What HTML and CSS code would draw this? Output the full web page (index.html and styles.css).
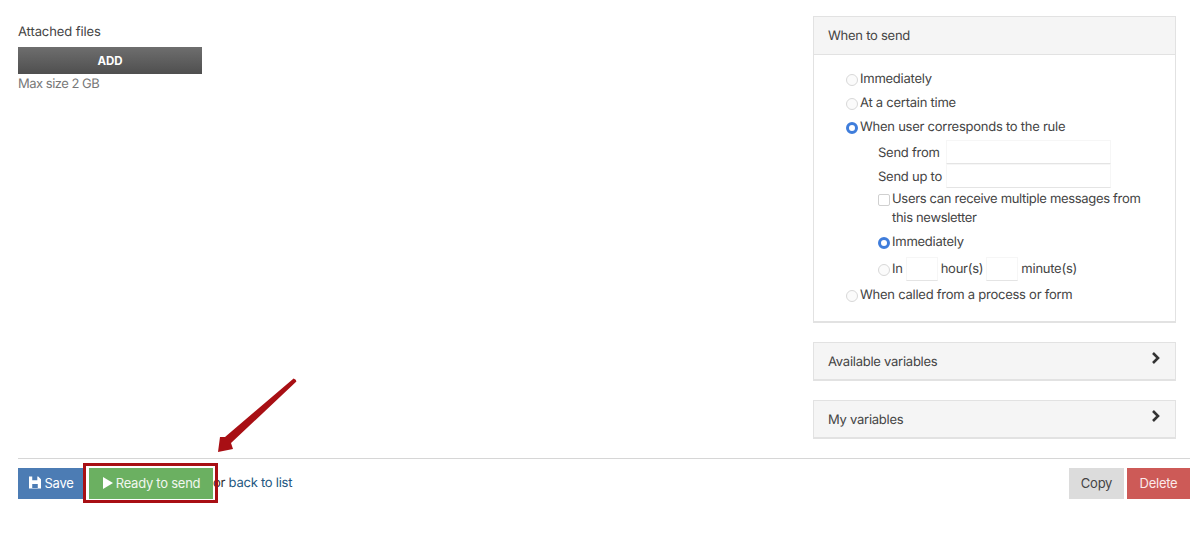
FILE: index.html
```html
<!DOCTYPE html>
<html lang="en">
<head>
<meta charset="utf-8">
<title>Newsletter</title>
<link rel="stylesheet" href="styles.css">
</head>
<body>
<div class="page">
  <div class="columns">
    <section class="files">
      <div class="files-label">Attached files</div>
      <button class="add-btn">ADD</button>
      <div class="files-hint">Max size 2 GB</div>
    </section>
    <aside class="side">
      <div class="panel">
        <div class="panel-head">When to send</div>
        <div class="panel-body">
          <label class="opt"><span class="radio"></span>Immediately</label>
          <label class="opt"><span class="radio"></span>At a certain time</label>
          <label class="opt"><span class="radio on"></span>When user corresponds to the rule</label>
          <div class="sub">
            <div class="field first"><span class="field-label">Send from</span><span class="input wide"></span></div>
            <div class="field"><span class="field-label">Send up to</span><span class="input wide"></span></div>
            <label class="check-row"><span class="check"></span><span>Users can receive multiple messages from this newsletter</span></label>
            <label class="opt sub-opt"><span class="radio on"></span>Immediately</label>
            <div class="in-row"><span class="radio"></span>In<span class="input small"></span>hour(s)<span class="input small"></span>minute(s)</div>
          </div>
          <label class="opt last-opt"><span class="radio"></span>When called from a process or form</label>
        </div>
      </div>
      <div class="panel closed">
        <div class="panel-head">Available variables
          <svg class="chev" viewBox="0 0 10 14" width="10" height="14"><path d="M2 2l5 5-5 5" fill="none" stroke="#333" stroke-width="2.6"/></svg>
        </div>
      </div>
      <div class="panel closed">
        <div class="panel-head">My variables
          <svg class="chev" viewBox="0 0 10 14" width="10" height="14"><path d="M2 2l5 5-5 5" fill="none" stroke="#333" stroke-width="2.6"/></svg>
        </div>
      </div>
    </aside>
  </div>
  <footer class="actions">
    <div class="actions-left">
      <button class="btn save">
        <svg viewBox="0 0 13 13" width="12" height="13"><path fill="#fff" fill-rule="evenodd" d="M0 0h10l3 3v10H0zM3.500 0v4h5.500V0zM3.500 8v4.500h6V8z"/></svg>
        Save</button>
      <button class="btn ready">
        <svg viewBox="0 0 10 12" width="10" height="12"><path fill="#fff" d="M0 0l10 6-10 6z"/></svg>
        Ready to send</button>
      <span class="or">or <a class="back" href="#">back to list</a></span>
    </div>
    <div class="actions-right">
      <button class="btn copy">Copy</button>
      <button class="btn delete">Delete</button>
    </div>
  </footer>
  <div class="highlight"></div>
  <svg class="arrow" viewBox="0 0 90 90" width="90" height="90"><path fill="#a80f14" d="M78.600 3.600Q81.500 4.500 81.400 6.600L16 68L18 74L3 77L5 62L10 62Z"/></svg>
</div>
</body>
</html>
```
FILE: styles.css
```css
* { box-sizing: border-box; }
html, body { margin: 0; height: 100%; overflow: hidden; background: #fff; }
body { font-family: Inter, "Liberation Sans", sans-serif; font-size: 13px; letter-spacing: -0.25px; color: #444; text-rendering: geometricPrecision; }
.page { position: relative; padding: 16px 10px 0 18px; height: 552px; }
.columns { display: flex; justify-content: space-between; padding-right: 14px; height: 432px; }
.files { width: 184px; padding-top: 8px; }
.files-label { line-height: 16px; color: #444; letter-spacing: -0.1px; }
.add-btn { display: block; width: 184px; height: 27px; margin-top: 7px; border: 0; color: #fff; font: 700 11.500px Inter, "Liberation Sans", sans-serif; background: linear-gradient(#6e6e6e, #4f4f4f); }
.files-hint { color: #777; line-height: 18px; padding-top: 1px; letter-spacing: -0.5px; }
.side { width: 363px; display: flex; flex-direction: column; gap: 19px; }
.panel { border: 1px solid #e2e2e2; border-bottom-width: 2px; }
.panel-head { display: flex; justify-content: space-between; align-items: center; height: 38px; padding: 0 14px; background: #f5f5f5; border-bottom: 1px solid #e2e2e2; color: #444; }
.closed .panel-head { border-bottom: 0; height: 36px; padding-top: 1px; }
.chev { margin-top: -7px; }
.panel-body { padding: 12px 0 0 32px; height: 266px; }
.opt { display: flex; align-items: center; height: 24px; gap: 2px; }
.radio { width: 12px; height: 12px; border-radius: 50%; border: 1px solid #d8d8d8; background: #fbfbfb; flex: none; margin-top: 2px; }
.radio.on { border: 3.500px solid #3f7ddb; background: #fff; }
.sub { padding-left: 32px; }
.field { display: flex; align-items: center; height: 24px; }
.field.first { margin-top: 1px; }
.field-label { width: 68px; flex: none; white-space: nowrap; padding-top: 2px; }
.input { display: inline-block; background: #fff; border: 1px solid #f6f6f6; border-bottom: 1px solid #e4e4e4; }
.input.wide { width: 165px; height: 24px; }
.input.small { width: 32px; height: 24px; margin: 0 3px; }
.check-row { display: flex; gap: 2px; line-height: 19px; margin-top: 2px; width: 270px; letter-spacing: -0.32px; }
.check { width: 12px; height: 12px; border: 1px solid #d0d0d0; border-radius: 2px; flex: none; margin-top: 4px; }
.sub-opt { margin-top: 2px; }
.in-row { display: flex; align-items: center; height: 28px; margin-top: 1px; }
.in-row .radio { margin-right: 2px; }
.last-opt { margin-top: 0; }
.actions { display: flex; justify-content: space-between; border-top: 1px solid #d6d6d6; margin-top: 10px; padding-top: 9px; }
.actions-left, .actions-right { display: flex; align-items: center; }
.actions-right { gap: 3px; }
.btn { height: 31px; border: 0; padding: 0 0 2px; font: 13px Inter, "Liberation Sans", sans-serif; letter-spacing: -0.25px; display: inline-flex; align-items: center; justify-content: center; gap: 3px; }
.save { width: 66px; padding-left: 1px; background: #4c7cb4; color: #fff; }
.ready { width: 124px; margin-left: 5px; padding-left: 1px; background: #6bb061; color: #f1f6ef; gap: 3px; }
.copy { width: 55px; background: #dcdcdc; color: #444; }
.delete { width: 63px; background: #cd5a57; color: #fbeaea; }
.or { margin-left: 0; color: #333; padding-bottom: 2px; }
.back { color: #24577f; text-decoration: none; }
.highlight { position: absolute; left: 83px; top: 463px; width: 135px; height: 40px; border: 3px solid #a80f14; }
.arrow { position: absolute; left: 215px; top: 375px; }
```
